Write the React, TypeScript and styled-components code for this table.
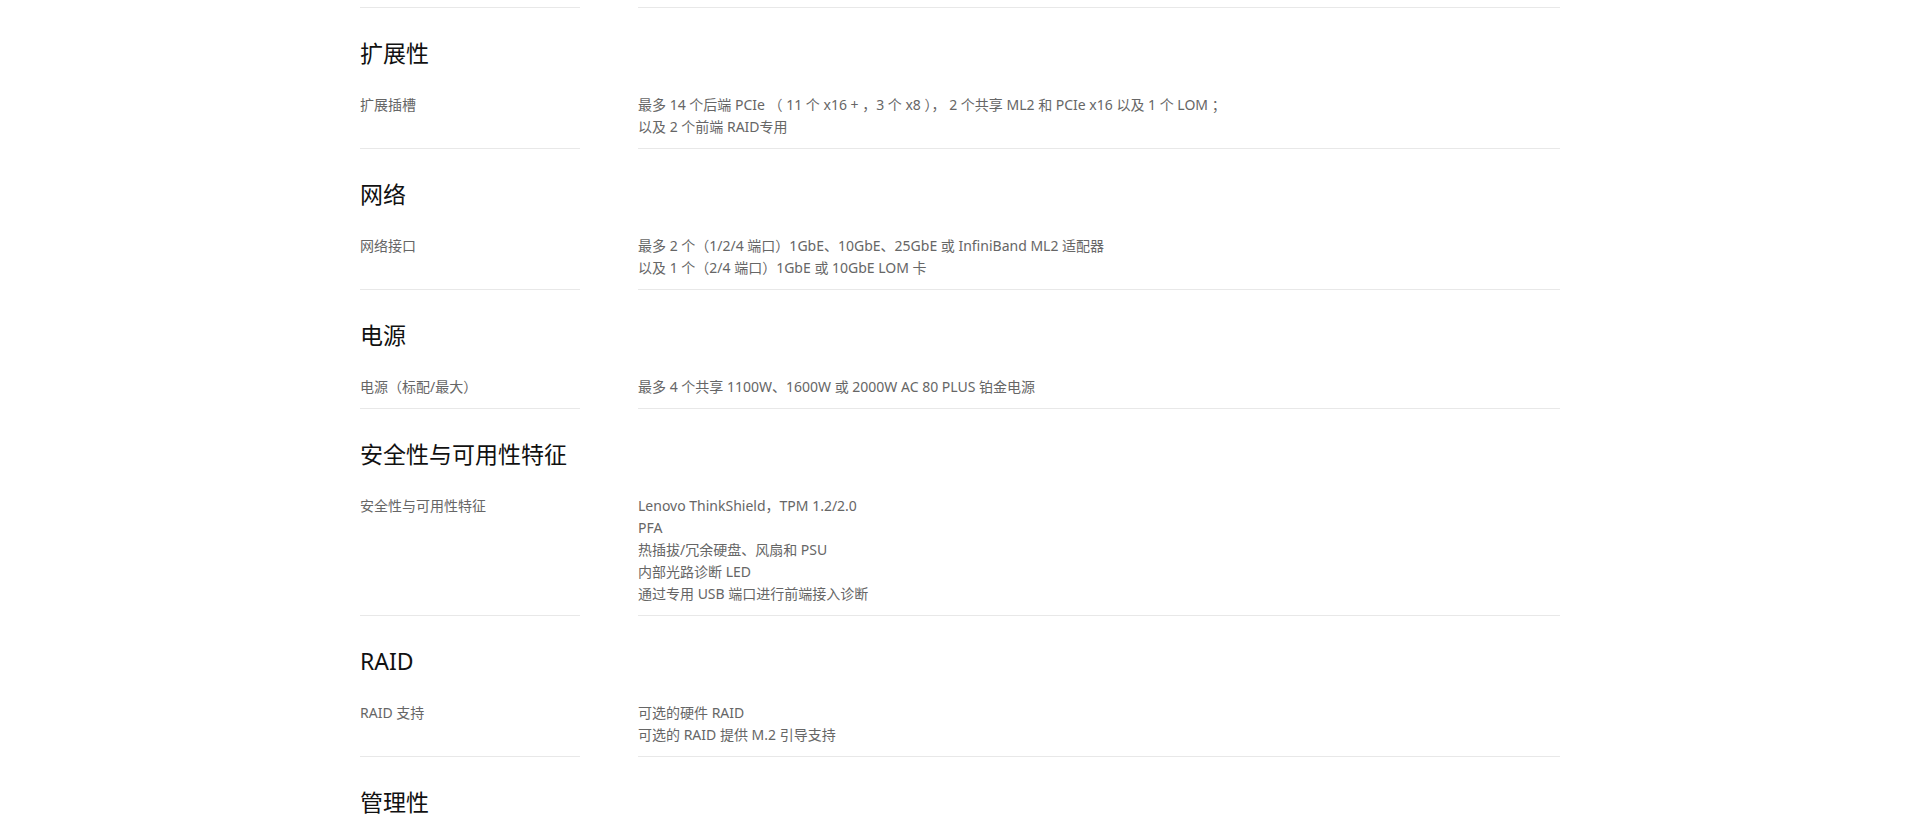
import React from "react";
import styled, { createGlobalStyle } from "styled-components";

//Data
type Spec = { label: string; lines: string[] };
type Section = { title: string; specs: Spec[] };

const sections: Section[] = [
  {
    title: "扩展性",
    specs: [
      {
        label: "扩展插槽",
        lines: [
          "最多 14 个后端 PCIe （ 11 个 x16 + ，3 个 x8 ）， 2 个共享 ML2 和 PCIe x16 以及 1 个 LOM ；",
          "以及 2 个前端 RAID专用",
        ],
      },
    ],
  },
  {
    title: "网络",
    specs: [
      {
        label: "网络接口",
        lines: [
          "最多 2 个（1/2/4 端口）1GbE、10GbE、25GbE 或 InfiniBand ML2 适配器",
          "以及 1 个（2/4 端口）1GbE 或 10GbE LOM 卡",
        ],
      },
    ],
  },
  {
    title: "电源",
    specs: [
      {
        label: "电源（标配/最大）",
        lines: ["最多 4 个共享 1100W、1600W 或 2000W AC 80 PLUS 铂金电源"],
      },
    ],
  },
  {
    title: "安全性与可用性特征",
    specs: [
      {
        label: "安全性与可用性特征",
        lines: [
          "Lenovo ThinkShield，TPM 1.2/2.0",
          "PFA",
          "热插拔/冗余硬盘、风扇和 PSU",
          "内部光路诊断 LED",
          "通过专用 USB 端口进行前端接入诊断",
        ],
      },
    ],
  },
  {
    title: "RAID",
    specs: [
      {
        label: "RAID 支持",
        lines: ["可选的硬件 RAID", "可选的 RAID 提供 M.2 引导支持"],
      },
    ],
  },
  {
    title: "管理性",
    specs: [
      {
        label: "系统管理",
        lines: ["XClarity Controller，XClarity Administrator，XClarity Energy Manager"],
      },
    ],
  },
];

const GlobalStyle = createGlobalStyle`
  html, body {
    margin: 0;
    padding: 0;
    background: #fff;
  }
  body {
    font-family: "Noto Sans", "Noto Sans CJK SC", sans-serif;
    -webkit-font-smoothing: antialiased;
  }
`;

const App = () => {
  return (
    <>
      <GlobalStyle />
      <Page>
        {/* tail of the previous row, scrolled above the window */}
        <Row>
          <Label $tail />
          <Value $tail />
        </Row>
        {sections.map((section) => (
          <SpecSection key={section.title}>
            <Title>{section.title}</Title>
            {section.specs.map((spec) => (
              <Row key={spec.label}>
                <Label>{spec.label}</Label>
                <Value>
                  {spec.lines.map((line) => (
                    <p key={line}>{line}</p>
                  ))}
                </Value>
              </Row>
            ))}
          </SpecSection>
        ))}
      </Page>
    </>
  );
};

const Page = styled.div`
  width: 1200px;
  margin: 0 auto;
`;

const SpecSection = styled.section`
  padding-top: 30px;
`;

const Title = styled.h3`
  margin: 0 0 26px;
  font-size: 23px;
  line-height: 30px;
  font-weight: 400;
  color: #111;
`;

const Row = styled.div`
  display: grid;
  grid-template-columns: 220px 1fr;
  column-gap: 58px;
`;

const Cell = styled.div<{ $tail?: boolean }>`
  height: ${({ $tail }) => ($tail ? "7px" : "auto")};
  padding-bottom: ${({ $tail }) => ($tail ? "0" : "10px")};
  border-bottom: 1px solid #e8e8e8;
  font-size: 14px;
  line-height: 22px;
  color: #666;
`;

const Label = styled(Cell)``;

const Value = styled(Cell)`
  p {
    margin: 0;
  }
`;

export default App;
